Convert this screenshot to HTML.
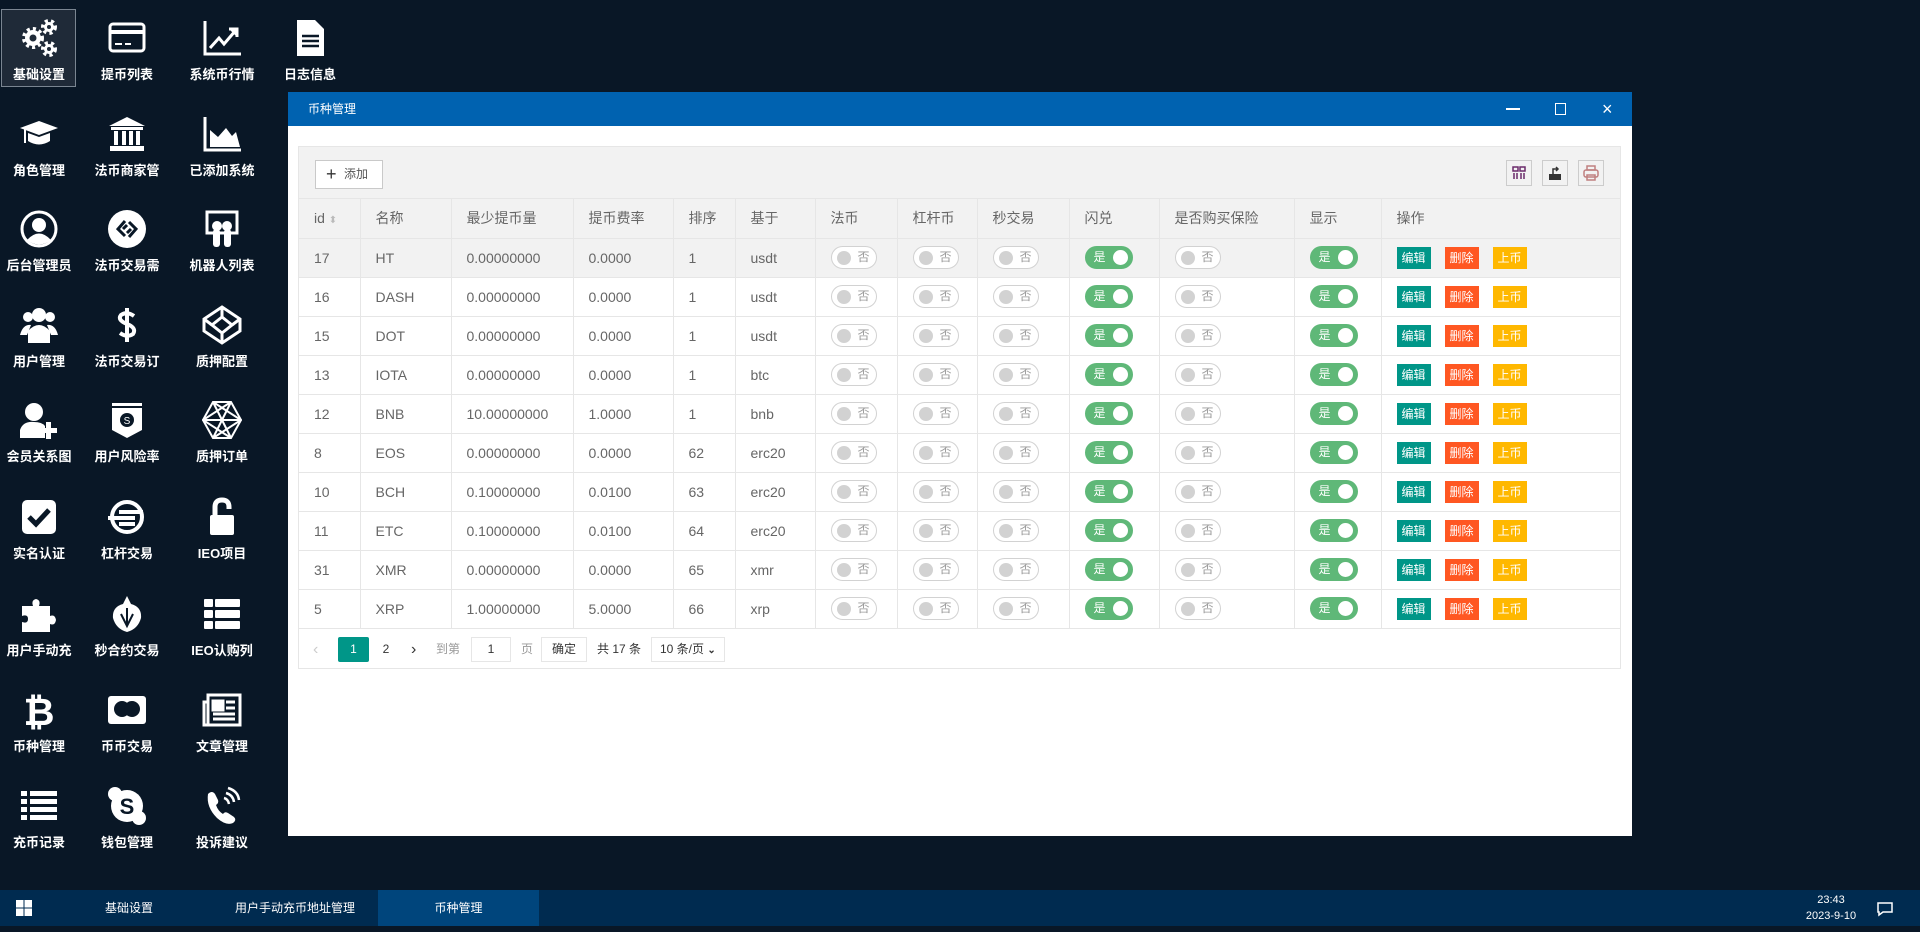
<!DOCTYPE html>
<html><head><meta charset="utf-8"><style>
*{margin:0;padding:0;box-sizing:border-box}
i{font-style:normal}
body{width:1920px;height:926px;background:#091726;position:relative;overflow:hidden;font-family:"Liberation Sans","Noto Sans CJK SC",sans-serif}
.it{position:absolute;width:90px;height:90px;text-align:center;color:#fff}
.it svg{position:absolute;left:25px;top:0;width:40px;height:40px}
.it span{position:absolute;left:-10px;right:-10px;top:46px;font-size:13px;font-weight:bold;white-space:nowrap}
.sel{position:absolute;left:1px;top:9px;width:75px;height:78px;background:#1f2a38;border:1px solid #7a8591}
.win{position:absolute;left:288px;top:92px;width:1344px;height:744px;background:#fff}
.tb{height:34px;background:#0062b0;color:#fff;font-size:12px;line-height:34px;padding-left:20px;position:relative}
.box{position:absolute;left:10px;top:54px;width:1323px;border:1px solid #e6e6e6;overflow:hidden}
.tool{height:52px;background:#f2f2f2;position:relative;border-bottom:1px solid #e6e6e6}
.add{position:absolute;left:16px;top:13px;width:68px;height:29px;border:1px solid #c9c9c9;background:#fff;font-size:12px;color:#555;line-height:27px;padding-left:28px}
.add b{position:absolute;left:10px;top:0;font-size:18px;font-weight:normal;color:#333}
.ti{position:absolute;top:13px;width:26px;height:26px;border:1px solid #ccc;background:#f2f2f2}
table{border-collapse:collapse;table-layout:fixed;width:1323px;font-size:14px;color:#666}
td,th{height:39px;border:1px solid #e6e6e6;border-left:none;padding-left:15px;text-align:left;font-weight:normal;white-space:nowrap;overflow:hidden}
th{background:#f2f2f2;border-top:none}
tr td:last-child,tr th:last-child{border-right:none}
tr.h td{background:#f2f2f2}
.off,.on{display:inline-block;width:46px;height:23px;border-radius:12px;vertical-align:middle;position:relative;font-size:12px;line-height:21px}
.off{border:1px solid #d2d2d2;background:#fff;color:#999;padding-left:26px}
.off:before{content:"";position:absolute;left:5px;top:4px;width:14px;height:14px;border-radius:50%;background:#d2d2d2}
.on{background:#5fb878;color:#fff;padding-left:8px;width:48px;border:1px solid #5fb878}
.on:before{content:"";position:absolute;right:4px;top:3px;width:15px;height:15px;border-radius:50%;background:#fff}
.bt{display:inline-block;height:22px;width:34px;color:#fff;font-size:12px;line-height:22px;text-align:center;margin-right:14px;vertical-align:middle}
.pg{height:39px;position:relative;font-size:12px;color:#333}
.pg div{position:absolute;top:8px;height:25px;line-height:25px}
.task{position:absolute;left:0;top:890px;width:1920px;height:36px;background:#002b50;color:#fff;font-size:12px}
.task div{position:absolute;top:0;height:36px;line-height:36px}
</style></head><body>

<div class="sel"></div>
<div class="it" style="left:-6px;top:18px"><svg viewBox="0 0 40 40" fill="#fff"><g stroke="#fff" stroke-width="4" stroke-dasharray="3 3"><circle cx="14" cy="20" r="9" fill="none"/><circle cx="30" cy="9" r="6" fill="none"/><circle cx="30" cy="31" r="6" fill="none"/></g><circle cx="14" cy="20" r="8"/><circle cx="14" cy="20" r="3.5" fill="#1f2a38"/><circle cx="30" cy="9" r="5"/><circle cx="30" cy="9" r="2" fill="#1f2a38"/><circle cx="30" cy="31" r="5"/><circle cx="30" cy="31" r="2" fill="#1f2a38"/></svg><span>基础设置</span></div>
<div class="it" style="left:82px;top:18px"><svg viewBox="0 0 40 40"><rect x="3" y="6" width="34" height="27" rx="3" fill="none" stroke="#fff" stroke-width="3"/><rect x="3" y="12" width="34" height="4" fill="#fff"/><rect x="8" y="25" width="7" height="2" fill="#fff"/><rect x="18" y="25" width="6" height="2" fill="#fff"/></svg><span>提币列表</span></div>
<div class="it" style="left:177px;top:18px"><svg viewBox="0 0 40 40" fill="none" stroke="#fff" stroke-width="3"><path d="M3 3V36H39"/><path d="M8 30L17 20L22 26L34 12"/><path d="M27 11H35V19" fill="#fff"/></svg><span>系统币行情</span></div>
<div class="it" style="left:265px;top:18px"><svg viewBox="0 0 40 40" fill="#fff"><path d="M7 2H25L34 11V38H7Z"/><path d="M12 18H29M12 23H29M12 28H29" stroke="#091726" stroke-width="2.5"/></svg><span>日志信息</span></div>
<div class="it" style="left:-6px;top:114px"><svg viewBox="0 0 40 40" fill="#fff"><path d="M1 14L20 7L39 14L20 21Z"/><path d="M9 19V27Q20 34 31 27V19L20 23Z"/><rect x="5" y="15" width="2" height="14"/></svg><span>角色管理</span></div>
<div class="it" style="left:82px;top:114px"><svg viewBox="0 0 40 40" fill="#fff"><path d="M20 3L38 12H2Z"/><rect x="4" y="13" width="32" height="3"/><rect x="7" y="17" width="4" height="14"/><rect x="15" y="17" width="4" height="14"/><rect x="22" y="17" width="4" height="14"/><rect x="29" y="17" width="4" height="14"/><rect x="3" y="32" width="34" height="5"/></svg><span>法币商家管</span></div>
<div class="it" style="left:177px;top:114px"><svg viewBox="0 0 40 40" fill="#fff"><path d="M3 3V36H39" fill="none" stroke="#fff" stroke-width="3"/><path d="M8 33V16L16 23L24 14L30 22L34 18L38 33Z"/></svg><span>已添加系统</span></div>
<div class="it" style="left:-6px;top:209px"><svg viewBox="0 0 40 40"><circle cx="20" cy="20" r="17" fill="none" stroke="#fff" stroke-width="3"/><circle cx="20" cy="16" r="7" fill="#fff"/><path d="M8 31Q20 18 32 31Q20 40 8 31Z" fill="#fff"/></svg><span>后台管理员</span></div>
<div class="it" style="left:82px;top:209px"><svg viewBox="0 0 40 40"><circle cx="20" cy="20" r="19" fill="#fff"/><path d="M18 12L11 20L18 27M22 13L29 20L22 28M16 20L20 16M24 20L20 24" fill="none" stroke="#091726" stroke-width="3"/></svg><span>法币交易需</span></div>
<div class="it" style="left:177px;top:209px"><svg viewBox="0 0 40 40" fill="#fff"><path d="M5 3H35V24H5Z" fill="none" stroke="#fff" stroke-width="3"/><circle cx="15" cy="17" r="5"/><circle cx="25" cy="17" r="5"/><rect x="11" y="20" width="7" height="18" rx="3"/><rect x="22" y="20" width="7" height="18" rx="3"/></svg><span>机器人列表</span></div>
<div class="it" style="left:-6px;top:305px"><svg viewBox="0 0 40 40" fill="#fff"><circle cx="20" cy="10" r="7"/><circle cx="9" cy="12" r="5"/><circle cx="31" cy="12" r="5"/><path d="M9 38V26Q20 14 31 26V38Z"/><path d="M1 30Q4 19 12 20L8 30Z"/><path d="M39 30Q36 19 28 20L32 30Z"/></svg><span>用户管理</span></div>
<div class="it" style="left:82px;top:305px"><svg viewBox="0 0 40 40"><path d="M27 11Q20 6 14 10Q10 15 20 19Q30 23 26 29Q20 33 13 28M20 3V37" fill="none" stroke="#fff" stroke-width="4"/></svg><span>法币交易订</span></div>
<div class="it" style="left:177px;top:305px"><svg viewBox="0 0 40 40" fill="none" stroke="#fff" stroke-width="3"><path d="M20 2L38 14V26L20 38L2 26V14Z"/><path d="M20 12L30 20L20 28L10 20Z"/><path d="M20 2V12M20 28V38M2 14L10 20M38 14L30 20"/></svg><span>质押配置</span></div>
<div class="it" style="left:-6px;top:400px"><svg viewBox="0 0 40 40" fill="#fff"><circle cx="15" cy="12" r="9"/><path d="M1 38V30Q4 21 15 22Q23 22 26 26V38Z"/><path d="M27 22H32V28H38V33H32V39H27V33H21V28H27Z"/></svg><span>会员关系图</span></div>
<div class="it" style="left:82px;top:400px"><svg viewBox="0 0 40 40"><path d="M5 3H35V30L20 38L5 30Z" fill="#fff"/><rect x="5" y="6" width="30" height="2" fill="#091726"/><circle cx="20" cy="20" r="7" fill="#091726"/><text x="20" y="24" font-size="10" text-anchor="middle" fill="#fff" font-family="Liberation Sans">S</text></svg><span>用户风险率</span></div>
<div class="it" style="left:177px;top:400px"><svg viewBox="0 0 40 40" fill="none" stroke="#fff" stroke-width="2"><path d="M11 2H29L39 20L29 38H11L1 20Z"/><path d="M11 2L29 38M29 2L11 38M1 20H39M11 2L39 20L11 38M29 2L1 20L29 38"/></svg><span>质押订单</span></div>
<div class="it" style="left:-6px;top:497px"><svg viewBox="0 0 40 40"><rect x="3" y="3" width="34" height="34" rx="5" fill="#fff"/><path d="M10 20L17 27L30 13" fill="none" stroke="#091726" stroke-width="5"/></svg><span>实名认证</span></div>
<div class="it" style="left:82px;top:497px"><svg viewBox="0 0 40 40" fill="none" stroke="#fff" stroke-width="4"><circle cx="20" cy="20" r="15"/><path d="M1 21H28M12 15H36M12 27H28"/></svg><span>杠杆交易</span></div>
<div class="it" style="left:177px;top:497px"><svg viewBox="0 0 40 40"><rect x="8" y="18" width="24" height="20" rx="2" fill="#fff"/><path d="M13 18V10Q13 3 20 3Q27 3 27 10V12" fill="none" stroke="#fff" stroke-width="5"/></svg><span>IEO项目</span></div>
<div class="it" style="left:-6px;top:594px"><svg viewBox="0 0 40 40" fill="#fff"><path d="M3 12H14Q12 6 17 5Q22 6 20 12H31V22Q36 20 37 26Q36 32 31 30V38H3V28Q9 30 9 25Q9 20 3 22Z"/></svg><span>用户手动充</span></div>
<div class="it" style="left:82px;top:594px"><svg viewBox="0 0 40 40" fill="#fff"><path d="M20 2L24 10Q35 13 34 24Q31 35 20 38Q9 35 6 24Q5 13 16 10Z"/><path d="M20 14V30M14 20L20 32L26 20" stroke="#091726" stroke-width="2" fill="none"/></svg><span>秒合约交易</span></div>
<div class="it" style="left:177px;top:594px"><svg viewBox="0 0 40 40" fill="#fff"><rect x="2" y="5" width="9" height="8" rx="1"/><rect x="13" y="5" width="25" height="8" rx="1"/><rect x="2" y="16" width="9" height="8" rx="1"/><rect x="13" y="16" width="25" height="8" rx="1"/><rect x="2" y="27" width="9" height="8" rx="1"/><rect x="13" y="27" width="25" height="8" rx="1"/></svg><span>IEO认购列</span></div>
<div class="it" style="left:-6px;top:690px"><svg viewBox="0 0 40 40"><text x="20" y="35" font-size="38" font-weight="bold" text-anchor="middle" fill="#fff" font-family="Liberation Sans">₿</text></svg><span>币种管理</span></div>
<div class="it" style="left:82px;top:690px"><svg viewBox="0 0 40 40"><rect x="1" y="6" width="38" height="28" rx="3" fill="#fff"/><circle cx="15" cy="19" r="8" fill="#091726"/><circle cx="25" cy="19" r="8" fill="#091726"/></svg><span>币币交易</span></div>
<div class="it" style="left:177px;top:690px"><svg viewBox="0 0 40 40" fill="none" stroke="#fff" stroke-width="3"><rect x="6" y="5" width="32" height="30"/><path d="M6 12H2V35H6"/><rect x="11" y="11" width="10" height="9" fill="#fff"/><path d="M24 12H33M24 18H33M11 24H33M11 29H33"/></svg><span>文章管理</span></div>
<div class="it" style="left:-6px;top:786px"><svg viewBox="0 0 40 40" fill="#fff"><rect x="2" y="5" width="6" height="5"/><rect x="11" y="5" width="27" height="5"/><rect x="2" y="13" width="6" height="5"/><rect x="11" y="13" width="27" height="5"/><rect x="2" y="21" width="6" height="5"/><rect x="11" y="21" width="27" height="5"/><rect x="2" y="29" width="6" height="5"/><rect x="11" y="29" width="27" height="5"/></svg><span>充币记录</span></div>
<div class="it" style="left:82px;top:786px"><svg viewBox="0 0 40 40"><circle cx="20" cy="20" r="16" fill="#fff"/><circle cx="8" cy="8" r="7" fill="#fff"/><circle cx="32" cy="32" r="7" fill="#fff"/><text x="20" y="28" font-size="22" font-weight="bold" text-anchor="middle" fill="#091726" font-family="Liberation Sans">S</text></svg><span>钱包管理</span></div>
<div class="it" style="left:177px;top:786px"><svg viewBox="0 0 40 40" fill="#fff"><path d="M6 8Q10 4 13 8L16 14Q17 17 14 19Q16 25 21 28Q23 25 26 27L32 31Q35 34 31 37Q24 40 15 32Q4 21 6 8Z"/><path d="M22 12Q26 13 27 18M24 7Q31 9 32 16M26 2Q36 5 37 14" fill="none" stroke="#fff" stroke-width="2.5"/></svg><span>投诉建议</span></div>

<div class="win">
 <div class="tb">币种管理
  <span style="position:absolute;left:1218px;top:16px;width:14px;height:2px;background:#fff"></span>
  <span style="position:absolute;left:1267px;top:11px;width:11px;height:12px;border:1px solid #fff"></span>
  <span style="position:absolute;left:1314px;top:0;font-size:18px;font-weight:normal">×</span>
 </div>
 <div class="box">
  <div class="tool">
   <div class="add"><b>+</b>添加</div>
   <div class="ti" style="left:1207px"><svg width="24" height="24" viewBox="0 0 24 24" fill="none" stroke="#6b2a6b" stroke-width="1.5"><rect x="6" y="6" width="5" height="4"/><rect x="13" y="6" width="5" height="4"/><path d="M7 12V18M10 12V18M14 12V18M17 12V18"/></svg></div>
   <div class="ti" style="left:1243px"><svg width="24" height="24" viewBox="0 0 24 24"><rect x="6" y="13" width="12" height="6" fill="#333"/><path d="M10 13V8H15M13 6L15 8L13 10" fill="none" stroke="#333" stroke-width="1.5"/></svg></div>
   <div class="ti" style="left:1279px"><svg width="24" height="24" viewBox="0 0 24 24" fill="none" stroke="#c08080" stroke-width="1.5"><rect x="8" y="5" width="8" height="4"/><rect x="5" y="9" width="14" height="7" rx="2"/><rect x="8" y="14" width="8" height="5"/></svg></div>
  </div>
  <table>
   <colgroup><col style="width:61px"><col style="width:91px"><col style="width:122px"><col style="width:100px"><col style="width:62px"><col style="width:80px"><col style="width:82px"><col style="width:80px"><col style="width:92px"><col style="width:90px"><col style="width:135px"><col style="width:87px"><col style="width:241px"></colgroup>
   <tr><th>id <span style="color:#bbb;font-size:10px">⬍</span></th><th>名称</th><th>最少提币量</th><th>提币费率</th><th>排序</th><th>基于</th><th>法币</th><th>杠杆币</th><th>秒交易</th><th>闪兑</th><th>是否购买保险</th><th>显示</th><th>操作</th></tr>
   <tr class="h"><td>17</td><td>HT</td><td>0.00000000</td><td>0.0000</td><td>1</td><td>usdt</td><td><i class="off">否</i></td><td><i class="off">否</i></td><td><i class="off">否</i></td><td><i class="on">是</i></td><td><i class="off">否</i></td><td><i class="on">是</i></td><td><i class="bt" style="background:#009688">编辑</i><i class="bt" style="background:#ff5722">删除</i><i class="bt" style="background:#ffb800">上币</i></td></tr>
   <tr><td>16</td><td>DASH</td><td>0.00000000</td><td>0.0000</td><td>1</td><td>usdt</td><td><i class="off">否</i></td><td><i class="off">否</i></td><td><i class="off">否</i></td><td><i class="on">是</i></td><td><i class="off">否</i></td><td><i class="on">是</i></td><td><i class="bt" style="background:#009688">编辑</i><i class="bt" style="background:#ff5722">删除</i><i class="bt" style="background:#ffb800">上币</i></td></tr>
   <tr><td>15</td><td>DOT</td><td>0.00000000</td><td>0.0000</td><td>1</td><td>usdt</td><td><i class="off">否</i></td><td><i class="off">否</i></td><td><i class="off">否</i></td><td><i class="on">是</i></td><td><i class="off">否</i></td><td><i class="on">是</i></td><td><i class="bt" style="background:#009688">编辑</i><i class="bt" style="background:#ff5722">删除</i><i class="bt" style="background:#ffb800">上币</i></td></tr>
   <tr><td>13</td><td>IOTA</td><td>0.00000000</td><td>0.0000</td><td>1</td><td>btc</td><td><i class="off">否</i></td><td><i class="off">否</i></td><td><i class="off">否</i></td><td><i class="on">是</i></td><td><i class="off">否</i></td><td><i class="on">是</i></td><td><i class="bt" style="background:#009688">编辑</i><i class="bt" style="background:#ff5722">删除</i><i class="bt" style="background:#ffb800">上币</i></td></tr>
   <tr><td>12</td><td>BNB</td><td>10.00000000</td><td>1.0000</td><td>1</td><td>bnb</td><td><i class="off">否</i></td><td><i class="off">否</i></td><td><i class="off">否</i></td><td><i class="on">是</i></td><td><i class="off">否</i></td><td><i class="on">是</i></td><td><i class="bt" style="background:#009688">编辑</i><i class="bt" style="background:#ff5722">删除</i><i class="bt" style="background:#ffb800">上币</i></td></tr>
   <tr><td>8</td><td>EOS</td><td>0.00000000</td><td>0.0000</td><td>62</td><td>erc20</td><td><i class="off">否</i></td><td><i class="off">否</i></td><td><i class="off">否</i></td><td><i class="on">是</i></td><td><i class="off">否</i></td><td><i class="on">是</i></td><td><i class="bt" style="background:#009688">编辑</i><i class="bt" style="background:#ff5722">删除</i><i class="bt" style="background:#ffb800">上币</i></td></tr>
   <tr><td>10</td><td>BCH</td><td>0.10000000</td><td>0.0100</td><td>63</td><td>erc20</td><td><i class="off">否</i></td><td><i class="off">否</i></td><td><i class="off">否</i></td><td><i class="on">是</i></td><td><i class="off">否</i></td><td><i class="on">是</i></td><td><i class="bt" style="background:#009688">编辑</i><i class="bt" style="background:#ff5722">删除</i><i class="bt" style="background:#ffb800">上币</i></td></tr>
   <tr><td>11</td><td>ETC</td><td>0.10000000</td><td>0.0100</td><td>64</td><td>erc20</td><td><i class="off">否</i></td><td><i class="off">否</i></td><td><i class="off">否</i></td><td><i class="on">是</i></td><td><i class="off">否</i></td><td><i class="on">是</i></td><td><i class="bt" style="background:#009688">编辑</i><i class="bt" style="background:#ff5722">删除</i><i class="bt" style="background:#ffb800">上币</i></td></tr>
   <tr><td>31</td><td>XMR</td><td>0.00000000</td><td>0.0000</td><td>65</td><td>xmr</td><td><i class="off">否</i></td><td><i class="off">否</i></td><td><i class="off">否</i></td><td><i class="on">是</i></td><td><i class="off">否</i></td><td><i class="on">是</i></td><td><i class="bt" style="background:#009688">编辑</i><i class="bt" style="background:#ff5722">删除</i><i class="bt" style="background:#ffb800">上币</i></td></tr>
   <tr><td>5</td><td>XRP</td><td>1.00000000</td><td>5.0000</td><td>66</td><td>xrp</td><td><i class="off">否</i></td><td><i class="off">否</i></td><td><i class="off">否</i></td><td><i class="on">是</i></td><td><i class="off">否</i></td><td><i class="on">是</i></td><td><i class="bt" style="background:#009688">编辑</i><i class="bt" style="background:#ff5722">删除</i><i class="bt" style="background:#ffb800">上币</i></td></tr>
  </table>
  <div class="pg">
   <div style="left:14px;color:#ccc;font-size:16px">‹</div>
   <div style="left:39px;width:31px;background:#009688;color:#fff;text-align:center;border-radius:2px">1</div>
   <div style="left:71px;width:32px;text-align:center">2</div>
   <div style="left:112px;font-size:16px">›</div>
   <div style="left:137px;color:#999">到第</div>
   <div style="left:172px;width:40px;border:1px solid #e6e6e6;text-align:center;line-height:23px">1</div>
   <div style="left:222px;color:#999">页</div>
   <div style="left:242px;width:46px;border:1px solid #e6e6e6;text-align:center;line-height:23px">确定</div>
   <div style="left:298px">共 17 条</div>
   <div style="left:352px;width:74px;border:1px solid #e6e6e6;padding-left:8px;line-height:23px">10 条/页 <b style="font-size:10px">⌄</b></div>
  </div>
 </div>
</div>

<div class="task">
 <div style="left:0;width:48px"><svg style="position:absolute;left:16px;top:10px" width="16" height="16" viewBox="0 0 16 16" fill="#fff"><rect x="0" y="0" width="7.5" height="7.5"/><rect x="8.5" y="0" width="7.5" height="7.5"/><rect x="0" y="8.5" width="7.5" height="7.5"/><rect x="8.5" y="8.5" width="7.5" height="7.5"/></svg></div>
 <div style="left:79px;width:100px;text-align:center">基础设置</div>
 <div style="left:220px;width:150px;text-align:center">用户手动充币地址管理</div>
 <div style="left:378px;width:161px;text-align:center;background:#00457c">币种管理</div>
 <div style="left:1790px;width:82px;text-align:center;line-height:16px;padding-top:2px;font-size:11px">23:43<br>2023-9-10</div>
 <div style="left:1876px"><svg style="margin-top:10px" width="18" height="18" viewBox="0 0 18 18" fill="none" stroke="#fff" stroke-width="1.5"><path d="M2 3H16V12H7L3 15V12H2Z"/></svg></div>
</div>
</body></html>
